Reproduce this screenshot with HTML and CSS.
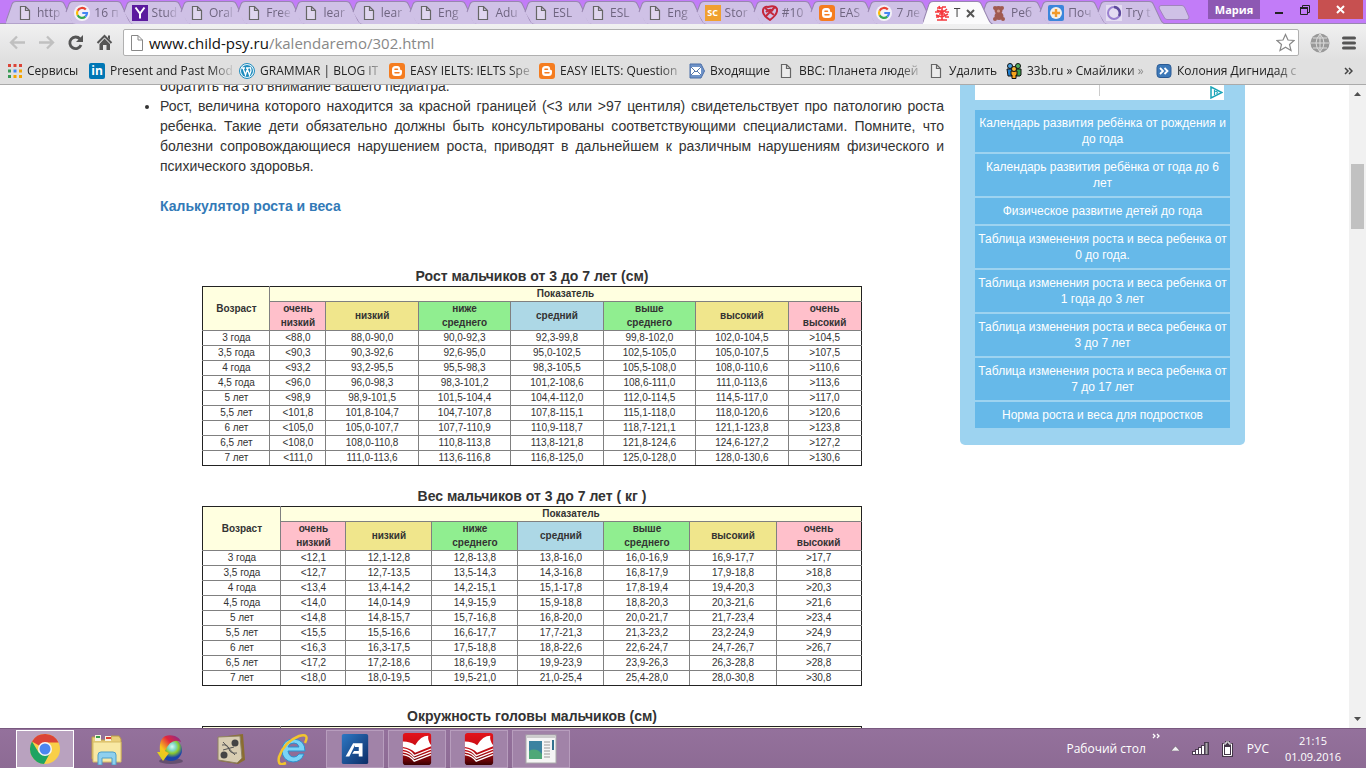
FILE: index.html
```html
<!DOCTYPE html>
<html lang="ru">
<head>
  <meta charset="UTF-8">
  <meta name="viewport" content="width=device-width, initial-scale=1.0">
  <title>Таблица изменения роста и веса ребенка от 3 до 7 лет</title>
  <link rel="stylesheet" href="styles.css">
</head>
<body>
  <svg class="defs" aria-hidden="true">
    <symbol id="tab" viewBox="0 0 71 24" preserveAspectRatio="none">
      <path d="M3 12 L6 4 Q7 1.500 10 1.500 H54 Q57 1.500 58 4 L65 19 Q67 24 71 24 H13 Q9 24 8 20 Z" fill="#cfc1e6"/>
      <path d="M3 12 L6 4 Q7 1.500 10 1.500 H54 Q57 1.500 58 4 L65 19 Q67 24 71 24" fill="none" stroke="#9886b0"/>
    </symbol>
    <symbol id="tab-first" viewBox="0 0 71 24" preserveAspectRatio="none">
      <path d="M-1 24 L6 4 Q7 1.500 10 1.500 H54 Q57 1.500 58 4 L65 19 Q67 24 71 24 Z" fill="#cfc1e6" stroke="#9886b0"/>
    </symbol>
    <symbol id="tab-active" viewBox="0 0 71 24" preserveAspectRatio="none">
      <path d="M-3 25 Q0 24 1 19 L6 4 Q7 1.500 10 1.500 H54 Q57 1.500 58 4 L65 19 Q67 24 71 25 Z" fill="#fbfbfc" stroke="#9886b0"/>
    </symbol>
    <symbol id="file" viewBox="0 0 16 16">
      <path d="M3.500 1.500 H8.500 L12.500 5.500 V14.500 H3.500 Z M8.500 1.500 V5.500 H12.500" fill="#fff" fill-opacity=".35" stroke="#666" stroke-width="1.200"/>
    </symbol>
    <symbol id="google" viewBox="0 0 16 16">
      <circle cx="8" cy="8" r="8" fill="#f3f1f8"/>
      <g fill="none" stroke-width="2.200">
        <path d="M11.800 4.600 A5 5 0 0 0 3.600 5.700" stroke="#ea4335"/>
        <path d="M3.600 5.700 A5 5 0 0 0 3.600 10.300" stroke="#fbbc05"/>
        <path d="M3.600 10.300 A5 5 0 0 0 11.300 11.700" stroke="#34a853"/>
        <path d="M11.300 11.700 A5 5 0 0 0 13 8 H8.300" stroke="#4285f4"/>
      </g>
    </symbol>
    <symbol id="blogger" viewBox="0 0 16 16">
      <rect width="16" height="16" rx="3" fill="#f57d20"/>
      <path d="M6.500 3 H8.500 Q11 3 11 5.500 Q11 7 12 7 Q13 7 13 8 V9.500 Q13 13 9.500 13 H6.500 Q3 13 3 9.500 V6.500 Q3 3 6.500 3 Z" fill="#fff"/>
      <path d="M6 6.200 H8.500 M6 9.800 H10" stroke="#f57d20" stroke-width="1.500" stroke-linecap="round"/>
    </symbol>
    <symbol id="redbook" viewBox="0 0 32 34">
      <defs><linearGradient id="red" x2="0" y2="1"><stop stop-color="#e3141b"/><stop offset=".55" stop-color="#c00b12"/><stop offset="1" stop-color="#3b0002"/></linearGradient></defs>
      <rect x="1" width="30" height="34" rx="3" fill="url(#red)"/>
      <path d="M1 9 Q9 9 14 13 Q20 3 28 3 Q27 8 31 13 V14 L14 21 Q9 16 1 15 Z" fill="#fff"/>
      <path d="M1 17 Q9 18 13 24 L31 17 M1 20 Q9 21 13 27 L31 20 M1 23 Q9 24 13 30 L31 23" fill="none" stroke="#fff" stroke-width="1.400"/>
    </symbol>
  </svg>

  <header class="browser">
    <div class="titlebar">
      <nav class="tabs">
        <a class="tab" href="#"><svg class="tab-bg"><use href="#tab-first"/></svg><svg class="icon"><use href="#file"/></svg><span>http</span></a>
        <a class="tab" href="#"><svg class="tab-bg"><use href="#tab"/></svg><svg class="icon"><use href="#google"/></svg><span>16 п</span></a>
        <a class="tab" href="#"><svg class="tab-bg"><use href="#tab"/></svg><svg class="icon" viewBox="0 0 16 16"><rect width="16" height="16" fill="#5b1a9e"/><path d="M3.500 2.500 L8 8.500 L12.500 2.500 M8 8.500 V13.500" fill="none" stroke="#fff" stroke-width="2"/></svg><span>Stud</span></a>
        <a class="tab" href="#"><svg class="tab-bg"><use href="#tab"/></svg><svg class="icon"><use href="#file"/></svg><span>Oral</span></a>
        <a class="tab" href="#"><svg class="tab-bg"><use href="#tab"/></svg><svg class="icon"><use href="#file"/></svg><span>Free</span></a>
        <a class="tab" href="#"><svg class="tab-bg"><use href="#tab"/></svg><svg class="icon"><use href="#file"/></svg><span>lear</span></a>
        <a class="tab" href="#"><svg class="tab-bg"><use href="#tab"/></svg><svg class="icon"><use href="#file"/></svg><span>lear</span></a>
        <a class="tab" href="#"><svg class="tab-bg"><use href="#tab"/></svg><svg class="icon"><use href="#file"/></svg><span>Eng</span></a>
        <a class="tab" href="#"><svg class="tab-bg"><use href="#tab"/></svg><svg class="icon"><use href="#file"/></svg><span>Adu</span></a>
        <a class="tab" href="#"><svg class="tab-bg"><use href="#tab"/></svg><svg class="icon"><use href="#file"/></svg><span>ESL</span></a>
        <a class="tab" href="#"><svg class="tab-bg"><use href="#tab"/></svg><svg class="icon"><use href="#file"/></svg><span>ESL</span></a>
        <a class="tab" href="#"><svg class="tab-bg"><use href="#tab"/></svg><svg class="icon"><use href="#file"/></svg><span>Eng</span></a>
        <a class="tab" href="#"><svg class="tab-bg"><use href="#tab"/></svg><b class="icon sc">SC</b><span>Stor</span></a>
        <a class="tab" href="#"><svg class="tab-bg"><use href="#tab"/></svg><svg class="icon" viewBox="0 0 16 16"><path d="M8 15 Q0 10 1 5 Q2 1 6 2 Q13 0 15 4 Q16 9 8 15 Z" fill="none" stroke="#c4283c" stroke-width="2"/><path d="M3 3 L12 10 M13 2 L4 11 M4 7 Q8 3 11 6" fill="none" stroke="#c4283c" stroke-width="2"/></svg><span>#10</span></a>
        <a class="tab" href="#"><svg class="tab-bg"><use href="#tab"/></svg><svg class="icon"><use href="#blogger"/></svg><span>EAS</span></a>
        <a class="tab" href="#"><svg class="tab-bg"><use href="#tab"/></svg><svg class="icon"><use href="#google"/></svg><span>7 ле</span></a>
        <a class="tab active" href="#"><svg class="tab-bg"><use href="#tab-active"/></svg><svg class="icon" viewBox="0 0 16 16"><path d="M8 15 V2 M8 12 L2 10 M8 12 L14 9 M8 8 L3 5 M8 8 L13 4 M1 7 H5 M11 7 H15 M3 3 H7 M8 2 H12 M2 12 H5 M11 12 H15 M3 15 H13 M5 1 L6 4 M5 9 H11 M5 6 H11" fill="none" stroke="#f5383c" stroke-width="1.600"/></svg><span>Т</span><svg class="tab-close" viewBox="0 0 9 9"><path d="M1 1 L8 8 M8 1 L1 8" stroke="#555" stroke-width="2"/></svg></a>
        <a class="tab" href="#"><svg class="tab-bg"><use href="#tab"/></svg><svg class="icon" viewBox="0 0 16 16"><g fill="#a05a50"><circle cx="4" cy="3" r="2"/><circle cx="11" cy="3" r="2"/><circle cx="7.500" cy="5" r="4"/><ellipse cx="8" cy="11" rx="4.500" ry="4"/><circle cx="4" cy="14" r="2"/><circle cx="12" cy="14" r="2"/></g><circle cx="7.500" cy="6" r="1.600" fill="#cf9a8c"/></svg><span>Реб</span></a>
        <a class="tab" href="#"><svg class="tab-bg"><use href="#tab"/></svg><svg class="icon" viewBox="0 0 16 16"><rect width="16" height="16" rx="2" fill="#3b86dc"/><circle cx="8" cy="8" r="6" fill="#f2efe9"/><path d="M8 4 V12 M4 8 H12" stroke="#f09a2a" stroke-width="2.400"/></svg><span>Поч</span></a>
        <a class="tab" href="#"><svg class="tab-bg"><use href="#tab"/></svg><svg class="icon" viewBox="0 0 16 16"><rect width="16" height="16" fill="#e4dcf2"/><circle cx="8" cy="8" r="6" fill="none" stroke="#9a80d0" stroke-width="2"/><path d="M8 2 A6 6 0 0 1 13 11" fill="none" stroke="#5d4a9c" stroke-width="2.500"/></svg><span>Try t</span></a>
      </nav>
      <button class="new-tab" aria-label="Новая вкладка"><svg viewBox="0 0 32 15"><path d="M3 .500 H24 Q26 .500 27 3 L31 12 Q31 14.500 29 14.500 H9 Q7 14.500 6 12 L1 3 Q1 .500 3 .500 Z" fill="#cfc1e6" stroke="#a184bd"/></svg></button>
      <div class="window-buttons">
        <button class="profile">Мария</button>
        <button class="win-btn" aria-label="Свернуть"><svg viewBox="0 0 12 12"><path d="M2 9 H10" stroke="#222" stroke-width="2"/></svg></button>
        <button class="win-btn" aria-label="Восстановить"><svg viewBox="0 0 12 12"><path d="M1.500 4 H8.500 V10.500 H1.500 Z M3.500 4 V1.500 H10.500 V8.500 H8.500" fill="none" stroke="#222"/><path d="M1 4 H9" stroke="#222" stroke-width="2"/></svg></button>
        <button class="win-btn close" aria-label="Закрыть"><svg viewBox="0 0 12 12"><path d="M2 2 L9 9 M9 2 L2 9" stroke="#fff" stroke-width="2"/></svg></button>
      </div>
    </div>

    <div class="toolbar">
      <button class="tool" aria-label="Назад"><svg viewBox="0 0 17 17"><path d="M16 8.500 H2 M8 2.500 L2 8.500 L8 14.500" fill="none" stroke="#c0c0c0" stroke-width="2.300"/></svg></button>
      <button class="tool" aria-label="Вперед"><svg viewBox="0 0 17 17"><path d="M1 8.500 H15 M9 2.500 L15 8.500 L9 14.500" fill="none" stroke="#c0c0c0" stroke-width="2.300"/></svg></button>
      <button class="tool" aria-label="Обновить"><svg viewBox="0 0 17 17"><path d="M13 5 A5.800 5.800 0 1 0 14 11" fill="none" stroke="#555" stroke-width="2.800"/><path d="M16 1 V8 H9 Z" fill="#555"/></svg></button>
      <button class="tool" aria-label="Домой"><svg viewBox="0 0 17 17"><path d="M1.500 9 L8.500 2 L15.500 9" fill="none" stroke="#555" stroke-width="2"/><path d="M8.500 4.500 L14 10 V16 H10.500 V11 H7 V16 H3.500 V10 Z M12 1.500 H14 V6 L12 4 Z" fill="#555"/></svg></button>
      <div class="omnibox">
        <svg class="icon" viewBox="0 0 16 16"><path d="M2.500 .500 H9 L13.500 5 V15.500 H2.500 Z M9 .500 V5 H13.500" fill="#fff" stroke="#888"/></svg>
        <span class="url">www.child-psy.ru<i>/kalendaremo/302.html</i></span>
        <svg class="star" viewBox="0 0 19 19"><path d="M9.500 1.500 L12 7 L18 7.500 L13.500 11.500 L15 17.500 L9.500 14.200 L4 17.500 L5.500 11.500 L1 7.500 L7 7 Z" fill="#fff" stroke="#888" stroke-width="1.200"/></svg>
      </div>
      <button class="tool" aria-label="Переводчик"><svg class="globe" viewBox="0 0 20 20"><circle cx="10" cy="10" r="9.500" fill="#999"/><path d="M10 1 V19 M1 10 H19 M3 5 H17 M3 15 H17 M10 1 Q2 10 10 19 Q18 10 10 1" fill="none" stroke="#ddd"/></svg></button>
      <button class="tool" aria-label="Меню"><svg class="menu" viewBox="0 0 14 14"><path d="M1.500 2 H12.500 M1.500 7 H12.500 M1.500 12 H12.500" stroke="#555" stroke-width="3" stroke-linecap="round"/></svg></button>
    </div>

    <nav class="bookmarks">
      <a href="#"><svg class="icon apps" viewBox="0 0 14 14"><path d="M0 1.500 H3 M5.500 1.500 H8.500 M11 1.500 H14" stroke="#db4437" stroke-width="3"/><path d="M0 7 H3 M0 12.500 H3" stroke="#3a9a55" stroke-width="3"/><path d="M5.500 7 H8.500" stroke="#4285f4" stroke-width="3"/><path d="M11 7 H14 M5.500 12.500 H8.500 M11 12.500 H14" stroke="#f4a400" stroke-width="3"/></svg><span>Сервисы</span></a>
      <a href="#"><b class="icon linkedin">in</b><span>Present and Past Mod</span></a>
      <a href="#"><svg class="icon" viewBox="0 0 16 16"><circle cx="8" cy="8" r="7.500" fill="#e8f4fa" stroke="#1e8cbe"/><circle cx="8" cy="8" r="6" fill="#1e8cbe"/><path d="M2.500 5 H6 M4 5 L6.500 12 L8 7 M7 5 H10.500 M8 5 L10.500 12 L12 8 Q12 6 11 4" fill="none" stroke="#fff" stroke-width="1.300"/></svg><span>GRAMMAR | BLOG IT</span></a>
      <a href="#"><svg class="icon"><use href="#blogger"/></svg><span>EASY IELTS: IELTS Spe</span></a>
      <a href="#"><svg class="icon"><use href="#blogger"/></svg><span>EASY IELTS: Question</span></a>
      <a href="#"><svg class="icon" viewBox="0 0 16 16"><path d="M1 1 H12 L15.500 8 L12 15 H1 Z" fill="#6f93c8" stroke="#4a6ea8"/><path d="M2 4 H12 V12 H2 Z" fill="#fff"/><path d="M2 4 L7 9 L12 4 M2 12 L6 8 M12 12 L8 8" fill="none" stroke="#5577aa"/></svg><span>Входящие</span></a>
      <a href="#"><svg class="icon"><use href="#file"/></svg><span>BBC: Планета людей</span></a>
      <a href="#"><svg class="icon"><use href="#file"/></svg><span>Удалить</span></a>
      <a href="#"><svg class="icon" viewBox="0 0 16 16"><g stroke="#111"><path d="M1 6 H6 V13 H2 Z" fill="#1f7fd0"/><path d="M10 6 H15 V12 L14 13 H10 Z" fill="#3a9d48"/><circle cx="4" cy="3" r="2.500" fill="#4aa0e0"/><circle cx="12" cy="3" r="2.500" fill="#50b060"/><path d="M5 8 H11 V12 H10 V15.500 H6 V12 H5 Z" fill="#f5a31c"/><circle cx="8" cy="6" r="2.500" fill="#f8b838"/></g></svg><span>33b.ru » Смайлики »</span></a>
      <a href="#"><svg class="icon" viewBox="0 0 16 16"><rect x="1" y="1.500" width="14" height="13" rx="3" fill="#3c78b8" stroke="#2a5a94"/><path d="M4 5 L7 8 L4 11 M8.500 5 L11.500 8 L8.500 11" fill="none" stroke="#fff" stroke-width="1.800"/></svg><span>Колония Дигнидад с</span></a>
      <button class="more" aria-label="Другие закладки"><svg viewBox="0 0 9 8"><path d="M1 1 L4 4 L1 7 M5 1 L8 4 L5 7" fill="none" stroke="#444" stroke-width="1.500"/></svg></button>
    </nav>
  </header>

  <div class="viewport">
    <div class="page">
      <div class="container">
        <main>
          <ul class="notes">
            <li class="cut">обратить на это внимание вашего педиатра.</li>
            <li>Рост, величина которого находится за красной границей (&lt;3 или &gt;97 центиля) свидетельствует про патологию роста ребенка. Такие дети обязательно должны быть консультированы соответствующими специалистами. Помните, что болезни сопровождающиеся нарушением роста, приводят в дальнейшем к различным нарушениям физического и психического здоровья.</li>
          </ul>
          <p class="calc"><a href="#">Калькулятор роста и веса</a></p>

          <table class="growth height">
            <caption>Рост мальчиков от 3 до 7 лет (см)</caption>
            <colgroup><col class="age"><col class="very-low"><col><col><col><col><col><col class="very-high"></colgroup>
            <thead>
              <tr><th rowspan="2">Возраст</th><th colspan="7">Показатель</th></tr>
              <tr><th class="pink">очень низкий</th><th class="khaki">низкий</th><th class="green">ниже среднего</th><th class="blue">средний</th><th class="green">выше среднего</th><th class="khaki">высокий</th><th class="pink">очень высокий</th></tr>
            </thead>
            <tbody>
              <tr><td>3 года</td><td>&lt;88,0</td><td>88,0-90,0</td><td>90,0-92,3</td><td>92,3-99,8</td><td>99,8-102,0</td><td>102,0-104,5</td><td>&gt;104,5</td></tr>
              <tr><td>3,5 года</td><td>&lt;90,3</td><td>90,3-92,6</td><td>92,6-95,0</td><td>95,0-102,5</td><td>102,5-105,0</td><td>105,0-107,5</td><td>&gt;107,5</td></tr>
              <tr><td>4 года</td><td>&lt;93,2</td><td>93,2-95,5</td><td>95,5-98,3</td><td>98,3-105,5</td><td>105,5-108,0</td><td>108,0-110,6</td><td>&gt;110,6</td></tr>
              <tr><td>4,5 года</td><td>&lt;96,0</td><td>96,0-98,3</td><td>98,3-101,2</td><td>101,2-108,6</td><td>108,6-111,0</td><td>111,0-113,6</td><td>&gt;113,6</td></tr>
              <tr><td>5 лет</td><td>&lt;98,9</td><td>98,9-101,5</td><td>101,5-104,4</td><td>104,4-112,0</td><td>112,0-114,5</td><td>114,5-117,0</td><td>&gt;117,0</td></tr>
              <tr><td>5,5 лет</td><td>&lt;101,8</td><td>101,8-104,7</td><td>104,7-107,8</td><td>107,8-115,1</td><td>115,1-118,0</td><td>118,0-120,6</td><td>&gt;120,6</td></tr>
              <tr><td>6 лет</td><td>&lt;105,0</td><td>105,0-107,7</td><td>107,7-110,9</td><td>110,9-118,7</td><td>118,7-121,1</td><td>121,1-123,8</td><td>&gt;123,8</td></tr>
              <tr><td>6,5 лет</td><td>&lt;108,0</td><td>108,0-110,8</td><td>110,8-113,8</td><td>113,8-121,8</td><td>121,8-124,6</td><td>124,6-127,2</td><td>&gt;127,2</td></tr>
              <tr><td>7 лет</td><td>&lt;111,0</td><td>111,0-113,6</td><td>113,6-116,8</td><td>116,8-125,0</td><td>125,0-128,0</td><td>128,0-130,6</td><td>&gt;130,6</td></tr>
            </tbody>
          </table>

          <table class="growth weight">
            <caption>Вес мальчиков от 3 до 7 лет ( кг )</caption>
            <colgroup><col class="age"><col class="very-low"><col><col><col><col><col><col class="very-high"></colgroup>
            <thead>
              <tr><th rowspan="2">Возраст</th><th colspan="7">Показатель</th></tr>
              <tr><th class="pink">очень низкий</th><th class="khaki">низкий</th><th class="green">ниже среднего</th><th class="blue">средний</th><th class="green">выше среднего</th><th class="khaki">высокий</th><th class="pink">очень высокий</th></tr>
            </thead>
            <tbody>
              <tr><td>3 года</td><td>&lt;12,1</td><td>12,1-12,8</td><td>12,8-13,8</td><td>13,8-16,0</td><td>16,0-16,9</td><td>16,9-17,7</td><td>&gt;17,7</td></tr>
              <tr><td>3,5 года</td><td>&lt;12,7</td><td>12,7-13,5</td><td>13,5-14,3</td><td>14,3-16,8</td><td>16,8-17,9</td><td>17,9-18,8</td><td>&gt;18,8</td></tr>
              <tr><td>4 года</td><td>&lt;13,4</td><td>13,4-14,2</td><td>14,2-15,1</td><td>15,1-17,8</td><td>17,8-19,4</td><td>19,4-20,3</td><td>&gt;20,3</td></tr>
              <tr><td>4,5 года</td><td>&lt;14,0</td><td>14,0-14,9</td><td>14,9-15,9</td><td>15,9-18,8</td><td>18,8-20,3</td><td>20,3-21,6</td><td>&gt;21,6</td></tr>
              <tr><td>5 лет</td><td>&lt;14,8</td><td>14,8-15,7</td><td>15,7-16,8</td><td>16,8-20,0</td><td>20,0-21,7</td><td>21,7-23,4</td><td>&gt;23,4</td></tr>
              <tr><td>5,5 лет</td><td>&lt;15,5</td><td>15,5-16,6</td><td>16,6-17,7</td><td>17,7-21,3</td><td>21,3-23,2</td><td>23,2-24,9</td><td>&gt;24,9</td></tr>
              <tr><td>6 лет</td><td>&lt;16,3</td><td>16,3-17,5</td><td>17,5-18,8</td><td>18,8-22,6</td><td>22,6-24,7</td><td>24,7-26,7</td><td>&gt;26,7</td></tr>
              <tr><td>6,5 лет</td><td>&lt;17,2</td><td>17,2-18,6</td><td>18,6-19,9</td><td>19,9-23,9</td><td>23,9-26,3</td><td>26,3-28,8</td><td>&gt;28,8</td></tr>
              <tr><td>7 лет</td><td>&lt;18,0</td><td>18,0-19,5</td><td>19,5-21,0</td><td>21,0-25,4</td><td>25,4-28,0</td><td>28,0-30,8</td><td>&gt;30,8</td></tr>
            </tbody>
          </table>

          <table class="growth weight">
            <caption>Окружность головы мальчиков (см)</caption>
            <colgroup><col class="age"><col class="very-low"><col><col><col><col><col><col class="very-high"></colgroup>
            <thead>
              <tr><th>&nbsp;</th><th colspan="7">&nbsp;</th></tr>
            </thead>
          </table>
        </main>

        <aside class="sidebar">
          <div class="ad"><svg viewBox="0 0 13 13"><path d="M1 1 L12 6.500 L1 12 Z" fill="none" stroke="#1ba5b8" stroke-width="1.500"/><path d="M4.500 4 V9 M7 5.500 V8 M4.500 4.500 L8 6.500" stroke="#1ba5b8" stroke-width="1.200"/></svg></div>
          <nav class="links">
            <a href="#">Календарь развития ребёнка от рождения и до года</a>
            <a href="#">Календарь развития ребёнка от года до 6 лет</a>
            <a href="#">Физическое развитие детей до года</a>
            <a href="#">Таблица изменения роста и веса ребенка от 0 до года.</a>
            <a href="#">Таблица изменения роста и веса ребенка от 1 года до 3 лет</a>
            <a href="#">Таблица изменения роста и веса ребенка от 3 до 7 лет</a>
            <a href="#">Таблица изменения роста и веса ребенка от 7 до 17 лет</a>
            <a href="#">Норма роста и веса для подростков</a>
          </nav>
        </aside>
      </div>
    </div>
    <div class="scrollbar">
      <svg viewBox="0 0 7 4"><path d="M0 4 L3.500 0 L7 4 Z" fill="#505050"/></svg>
      <div class="track"><div class="thumb"></div></div>
      <svg viewBox="0 0 7 4"><path d="M0 0 L3.500 4 L7 0 Z" fill="#505050"/></svg>
    </div>
  </div>

  <footer class="taskbar">
    <button class="task current" aria-label="Google Chrome"><svg viewBox="0 0 32 32"><circle cx="16" cy="16" r="15" fill="#f9cf48"/><path d="M16 16 L3 8.500 A15 15 0 0 1 29.500 9.500 H16 Z" fill="#db4437"/><path d="M16 16 L9.700 19.500 L3 8.500 A15 15 0 0 0 15 31 L21 20 Z" fill="#1da462"/><circle cx="16" cy="16" r="7" fill="#f5f5f5"/><circle cx="16" cy="16" r="5.500" fill="#4a86f0"/></svg></button>
    <button class="task" aria-label="Проводник"><svg viewBox="0 0 32 32"><path d="M1 4 H8 L10 7 H20 V3 H28 L30 6 V26 H1 Z" fill="#e9cf7a" stroke="#b99a48"/><path d="M4 2 H10 V8 H4 Z M14 3 H20 V8 H14 Z" fill="#f7f4df"/><path d="M5 4 H9" stroke="#3a9d48" stroke-width="2"/><path d="M15 5 H20" stroke="#e04030" stroke-width="2"/><path d="M2 9 H30 V29 H2 Z" fill="#f8e8a4" stroke="#d6bb66"/><path d="M7 32 V22 Q7 19 10 19 H22 Q25 19 25 22 V32 H21 V25 H11 V32 Z" fill="#8fd0ee" stroke="#4f9fc8"/></svg></button>
    <button class="task" aria-label="Загрузчик"><svg viewBox="0 0 32 32"><defs><radialGradient id="ball" cx=".55" cy=".35"><stop stop-color="#d8fbf2"/><stop offset=".35" stop-color="#7fd6c4"/><stop offset=".6" stop-color="#8ccc2e"/><stop offset="1" stop-color="#1c45a8"/></radialGradient><linearGradient id="flame" x1="1" x2="0" y2="1"><stop stop-color="#7a2c9a"/><stop offset=".35" stop-color="#e3263c"/><stop offset=".65" stop-color="#f7c51e"/><stop offset="1" stop-color="#c8d820"/></linearGradient></defs><ellipse cx="18" cy="28" rx="12" ry="3" fill="#655070"/><circle cx="18" cy="17" r="11" fill="url(#ball)"/><path d="M28 9 Q18 4 12 18 L16 20 L10 28 L4 19 L7 19 Q5 -1 22 3 Q27 5 28 9 Z" fill="url(#flame)"/></svg></button>
    <button class="task" aria-label="Игра"><svg viewBox="0 0 32 32"><path d="M5 4 L28 1 L30 27 L23 31 L4 28 Z" fill="#8a6d30"/><path d="M3 4 L25 3 L27 25 L22 30 L3 27 Z" fill="#d8cdb2" stroke="#8f8262"/><circle cx="20" cy="10" r="3.500" fill="#444"/><circle cx="9" cy="22" r="3.500" fill="#444"/><path d="M8 9 L20 22 M19 14 L8 17 M7 12 Q13 11 14 16 T22 20" fill="none" stroke="#555"/></svg></button>
    <button class="task" aria-label="Internet Explorer"><svg viewBox="0 0 32 32"><path d="M28 18 H11 Q12 24 17 24 Q20 24 22 21 H27 Q24 29 16 29 Q5 28 5 17 Q6 6 17 6 Q28 7 28 18 Z M11 14 H22 Q21 10 17 10 Q12 10 11 14 Z" fill="#7ad4f7" fill-rule="evenodd" stroke="#2a91cf"/><path d="M28 10 Q33 0 22 3 Q7 9 2 24 Q0 34 9 30" fill="none" stroke="#f2c52e" stroke-width="2.500"/></svg></button>
    <button class="task open" aria-label="Приложение A"><svg viewBox="0 0 32 34"><defs><linearGradient id="navy" x2="1" y2="1"><stop stop-color="#2e78c4"/><stop offset="1" stop-color="#0b2c66"/></linearGradient></defs><rect x="2" y="1" width="28" height="32" rx="2" fill="url(#navy)"/><path d="M6 25 L14 11 H17 L10 25 Z M16 11 H24 V25 H20 V15 H16 Z M15 19 H20 V22 H13 Z" fill="#fff"/></svg></button>
    <button class="task open" aria-label="Словарь"><svg><use href="#redbook"/></svg></button>
    <button class="task open" aria-label="Словарь 2"><svg><use href="#redbook"/></svg></button>
    <button class="task open" aria-label="Документ"><svg viewBox="0 0 32 32"><rect x="1" y="2" width="30" height="28" fill="#f5f5f5" stroke="#aaa"/><path d="M2 4 H30" stroke="#ccc" stroke-width="2"/><rect x="4" y="8" width="13" height="18" fill="#3c82a0"/><path d="M4 18 Q11 14 17 21 V26 H4 Z" fill="#4fa878"/><path d="M19 9 H25 M19 12 H25 M19 15 H25 M19 18 H25 M19 21 H25 M19 24 H25" stroke="#999"/><path d="M28 7 V17" stroke="#33718f" stroke-width="2"/></svg></button>

    <div class="tray">
      <span class="desktop">Рабочий стол</span>
      <svg class="chevrons" viewBox="0 0 9 6"><path d="M1 1 L3 3 L1 5 M5 1 L7 3 L5 5" fill="none" stroke="#fff" stroke-width="1.300"/></svg>
      <svg class="arrow" viewBox="0 0 9 5"><path d="M0 5 L4.500 0 L9 5 Z" fill="#f3eef6" stroke="#555" stroke-width=".500"/></svg>
      <svg class="signal" viewBox="0 0 17 13"><path d="M0 9 H3 V7 H6 V5 H9 V3 H12 V0 H17 V13 H0 Z" fill="#4a3b50"/><path d="M2 12 V10 M5 12 V8 M8 12 V6 M11 12 V4" stroke="#fff" stroke-width="2"/><path d="M14.500 12 V1" stroke="#aaa" stroke-width="2"/></svg>
      <svg class="battery" viewBox="0 0 11 16"><path d="M3 0 H8 V2 H11 V16 H0 V2 H3 Z" fill="#443648"/><path d="M4 1 H7 V3 H9.500 V14.500 H1.500 V3 H4 Z" fill="#443648" stroke="#fff"/><path d="M3 6 H8 V13 H3 Z" fill="#fff"/></svg>
      <span class="lang">РУС</span>
      <div class="clock"><time>21:15</time><time>01.09.2016</time></div>
    </div>
  </footer>
</body>
</html>
```
FILE: styles.css
```css
* {
  box-sizing: border-box;
}
body {
  margin: 0;
  height: 100vh;
  display: flex;
  flex-direction: column;
  overflow: hidden;
  background-color: white;
  color: #333;
  font-family: "Liberation Sans", Arial, sans-serif;
  font-size: 14px;
  line-height: 20px;
}
a {
  text-decoration: none;
}
button {
  border: none;
  padding: 0;
  background: none;
  font: inherit;
}
svg {
  display: block;
}
.defs {
  position: absolute;
  width: 0;
  height: 0;
}
.icon {
  flex: none;
  width: 16px;
  height: 16px;
}

/* browser window */
.browser,
.taskbar {
  font-family: "Open Sans", "Noto Sans", sans-serif;
  font-size: 12px;
  line-height: 16px;
}
.browser {
  flex: none;
  background: linear-gradient(#fbfbfc, #e0e0e0 60px);
  border-bottom: 1px solid #aaa;
}
.titlebar {
  display: flex;
  height: 24px;
  padding-left: 6px;
  background-color: #c27cf8;
  box-shadow: inset 0 -1px #9886b0;
}
.tabs {
  flex: 1;
  min-width: 0;
  display: flex;
}
.tab {
  position: relative;
  flex: 1 1 0;
  min-width: 0;
  display: flex;
  align-items: center;
  gap: 4px;
  padding: 2px 0 0 11px;
  color: #6f6580;
}
.tab-bg {
  position: absolute;
  left: 0;
  top: 0;
  width: calc(100% + 14px);
  height: 24px;
  overflow: visible;
}
.tab .icon,
.tab span,
.tab-close {
  position: relative;
}
.tab span {
  flex: 1;
  min-width: 0;
  overflow: hidden;
  white-space: nowrap;
  -webkit-mask-image: linear-gradient(to right, #000 14px, transparent 27px);
  mask-image: linear-gradient(to right, #000 14px, transparent 27px);
}
.tab.active {
  z-index: 1;
  color: #444;
}
.tab.active span {
  flex: none;
  width: 8px;
}
.tab-close {
  flex: none;
  width: 9px;
  height: 9px;
}
.sc {
  background-color: #f0a030;
  color: white;
  font-size: 9px;
  text-align: center;
}
.new-tab {
  align-self: center;
  margin-left: 6px;
}
.new-tab svg {
  width: 32px;
  height: 15px;
}
.window-buttons {
  display: flex;
  height: 19px;
  margin: 0 3px 0 18px;
}
.profile {
  width: 52px;
  background-color: #8d58b3;
  color: white;
  font-weight: bold;
  font-size: 11px;
}
.win-btn {
  display: flex;
  align-items: center;
  justify-content: center;
  width: 26px;
}
.profile + .win-btn {
  margin-left: 6px;
}
.win-btn svg {
  width: 12px;
  height: 12px;
}
.win-btn.close {
  width: 45px;
  background-color: #c75050;
}
.toolbar {
  display: flex;
  align-items: center;
  gap: 12px;
  padding: 5px 10px 2px 9px;
}
.tool svg {
  width: 17px;
  height: 17px;
}
.tool .globe {
  width: 20px;
  height: 20px;
}
.tool .menu {
  width: 14px;
  height: 14px;
}
.omnibox {
  flex: 1;
  display: flex;
  align-items: center;
  gap: 4px;
  height: 27px;
  margin: 0 -1px 0 -2px;
  padding: 0 3px 0 5px;
  background-color: white;
  border: 1px solid #b0b0b0;
  border-radius: 2px;
}
.url {
  flex: 1;
  color: #111;
  font-size: 15px;
  line-height: 24px;
}
.url i {
  color: #888;
  font-style: normal;
}
.star {
  width: 19px;
  height: 19px;
}
.bookmarks {
  display: grid;
  grid-template-columns: 81px 150px 150px 150px 150px 89px 150px 78px 150px 1fr 12px;
  align-items: center;
  height: 26px;
  padding: 0 10px 0 8px;
}
.bookmarks a {
  display: flex;
  align-items: center;
  gap: 5px;
  min-width: 0;
  color: #222;
}
.bookmarks span {
  max-width: 128px;
  overflow: hidden;
  white-space: nowrap;
  -webkit-mask-image: linear-gradient(to right, #000 100px, transparent 126px);
  mask-image: linear-gradient(to right, #000 100px, transparent 126px);
}
.icon.apps {
  width: 14px;
  height: 14px;
}
.linkedin {
  border-radius: 2px;
  background-color: #0077b5;
  color: white;
  text-align: center;
}
.more svg {
  width: 9px;
  height: 8px;
}

/* page */
.viewport {
  flex: 1;
  min-height: 0;
  display: flex;
  overflow: hidden;
}
.page {
  flex: 1;
  overflow: hidden;
}
.container {
  display: flex;
  align-items: flex-start;
  gap: 16px;
  max-width: 1141px;
  margin: -9px auto 0;
}
main {
  flex: 1;
  padding-left: 16px;
}
.notes {
  margin: 0;
  padding-left: 40px;
  text-align: justify;
}
.notes .cut {
  list-style: none;
}
.calc {
  margin: 20px 0 50px 40px;
  font-weight: bold;
}
.calc a {
  color: #337ab7;
}
.growth {
  width: 80%;
  margin: 0 auto 20px;
  table-layout: fixed;
  border-collapse: collapse;
  font-size: 10px;
  line-height: 14px;
  text-align: center;
}
.growth caption {
  color: #333;
  font-size: 14px;
  font-weight: bold;
  line-height: 20px;
}
.growth th,
.growth td {
  padding: 0;
  border: 1px solid #808080;
}
.growth th {
  background-color: #ffffe0;
}
.growth tr:first-child th {
  border-top-color: #222;
}
.growth tr:first-child th:first-child,
.growth td:first-child {
  border-left-color: #222;
}
.growth th:last-child,
.growth td:last-child {
  border-right-color: #222;
}
.growth tbody tr:last-child td {
  border-bottom-color: #222;
}
.growth .age {
  width: 67px;
}
.growth .very-low {
  width: 56px;
}
.growth .very-high {
  width: 73px;
}
.weight .age {
  width: 78px;
}
.weight .very-low {
  width: 65px;
}
.weight .very-high {
  width: 85px;
}
.growth .pink {
  padding: 0 8px;
  background-color: pink;
}
.growth .khaki {
  background-color: khaki;
}
.growth .green {
  padding: 0 16px;
  background-color: lightgreen;
}
.growth .blue {
  background-color: lightblue;
}
.sidebar {
  flex: none;
  width: 285px;
  padding: 0 15px 17px;
  border-radius: 0 0 5px 5px;
  background-color: #9dd3f0;
}
.ad {
  display: flex;
  justify-content: flex-end;
  align-items: flex-end;
  height: 24px;
  margin: 0 6px 10px 0;
  padding: 1px;
  background: linear-gradient(#ccc, #ccc) 50% 0 / 1px 20px no-repeat white;
}
.ad svg {
  width: 13px;
  height: 13px;
}
.links {
  display: flex;
  flex-direction: column;
  gap: 2px;
}
.links a {
  padding: 5px 0;
  background-color: #66b9e9;
  color: white;
  font-size: 12px;
  line-height: 16px;
  text-align: center;
}
.scrollbar {
  flex: none;
  display: flex;
  flex-direction: column;
  align-items: center;
  width: 17px;
  padding: 7px 0;
  background-color: #f1f1f1;
}
.scrollbar svg {
  width: 7px;
  height: 4px;
}
.track {
  flex: 1;
  padding-top: 68px;
}
.thumb {
  width: 13px;
  height: 65px;
  background-color: #c1c1c1;
}

/* taskbar */
.taskbar {
  flex: none;
  display: flex;
  align-items: center;
  gap: 4px;
  height: 40px;
  padding: 0 8px 0 16px;
  border-top: 1px solid #79597f;
  background: linear-gradient(#94719c, #8d6b94);
  color: white;
}
.task {
  display: flex;
  align-items: center;
  justify-content: center;
  width: 58px;
  height: 38px;
  border: 1px solid transparent;
}
.task svg {
  width: 32px;
  height: 32px;
}
.task.open {
  border-color: #b79dbd;
  background-color: #a183a8;
}
.task.current {
  border-color: #fff;
  background-color: #b9a2bf;
}
.tray {
  flex: 1;
  display: flex;
  align-items: center;
  justify-content: flex-end;
}
.chevrons {
  align-self: flex-start;
  width: 9px;
  height: 6px;
  margin: 0 10px 0 6px;
}
.arrow {
  width: 9px;
  height: 5px;
  margin-right: 12px;
}
.signal {
  width: 17px;
  height: 13px;
  margin-right: 13px;
}
.battery {
  width: 11px;
  height: 16px;
  margin-right: 14px;
}
.lang {
  margin-right: 8px;
}
.clock {
  width: 72px;
  margin-right: 9px;
  font-size: 11px;
  text-align: center;
}
.clock time {
  display: block;
}
```
